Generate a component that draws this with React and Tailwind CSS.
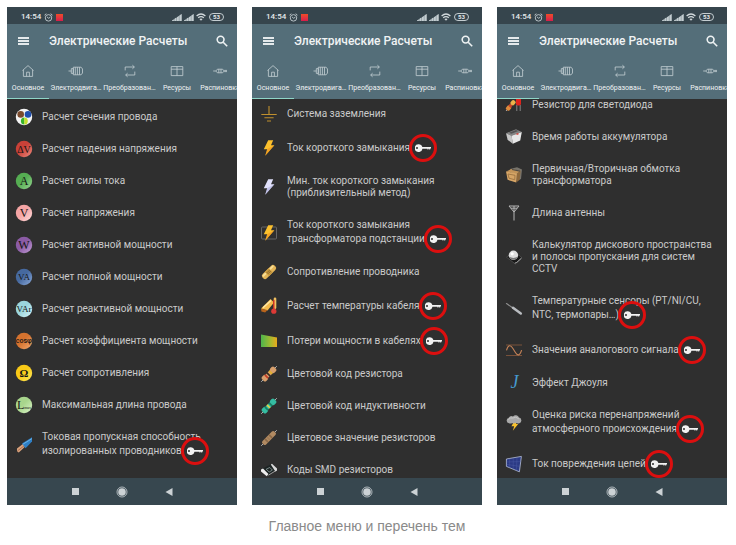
import React from "react";

const SERIF = "Liberation Serif, serif";
const ROBOTO = "Roboto, sans-serif";

function Disc({ id, light, dark, label, size = 10, color = "#151515", family = SERIF, y = 11.5, weight = 400 }) {
  return (
    <svg viewBox="0 0 16 16" className="size-4 overflow-visible" aria-hidden="true">
      <defs>
        <linearGradient id={id} x1="0" y1="0" x2="1" y2="1">
          <stop offset="0" stopColor={dark} />
          <stop offset="0.45" stopColor={dark} />
          <stop offset="1" stopColor={light} />
        </linearGradient>
      </defs>
      <circle cx="8" cy="8" r="8.2" fill={`url(#${id})`} />
      <text x="8" y={y} textAnchor="middle" fontSize={size} fontFamily={family} fontWeight={weight} fill={color}>
        {label}
      </text>
    </svg>
  );
}

function Svg({ children }) {
  return (
    <svg viewBox="0 0 16 16" className="size-4 overflow-visible" fill="none" aria-hidden="true">
      {children}
    </svg>
  );
}

function WireSection() {
  return (
    <Svg>
      <circle cx="8" cy="8" r="8.2" fill="#f4f4f4" />
      <circle cx="4.7" cy="5.4" r="3.3" fill="#7a4a2c" />
      <circle cx="12" cy="5.4" r="3.3" fill="#1f4fae" />
      <path d="M8.4 8.6a3.5 3.5 0 0 0 0 7z" fill="#36b52a" />
      <path d="M8.3 8.6a3.5 3.5 0 0 1 0 7z" fill="#c4e02a" />
    </Svg>
  );
}

function WireEnd() {
  return (
    <Svg>
      <path d="M1 11.5 7.5 6.5l2 2.8L2.8 15.4Q.5 15 1 11.5z" fill="#d9a27c" />
      <path d="M1.6 13.8 8.4 8.6" stroke="#9c6546" strokeWidth=".8" />
      <path d="M6 6.6 16 .2v4.4L9.6 11.2z" fill="#2f7fc4" />
      <path d="M7 7.2 16 1.6" stroke="#69b1e6" />
    </Svg>
  );
}

function Ground() {
  return (
    <Svg>
      <path d="M8 0v8.5M.3 8.5h15.4M3.4 11.8h9.2M6 15h4" stroke="#c0902e" strokeWidth="1.1" />
    </Svg>
  );
}

function Bolt({ color = "#fbc02d", shade = "#f08c1c", framed = false }) {
  return (
    <Svg>
      {framed && <rect x=".5" y="2" width="15" height="12" rx="1" stroke="#747474" strokeWidth=".8" />}
      <path d="M7.2.2h5L10 5.2h3.4L4.2 15.8l2-6.6H2.8z" fill={color} />
      <path d="M13.4 5.2 4.2 15.8l2-6.6 1.6-1z" fill={shade} opacity=".55" />
    </Svg>
  );
}

function Conductor() {
  return (
    <Svg>
      <g transform="rotate(-45 8 8)">
        <rect x="-.6" y="5" width="17.2" height="6" rx="2.6" fill="#e3b558" />
        <rect x=".5" y="5.8" width="15" height="1.8" rx=".9" fill="#f8df97" />
        <rect x="5" y="5" width="5.5" height="6" fill="#c99b41" />
        <path d="M6.3 6.5v3M7.8 6.5v3M9.2 6.5v3" stroke="#77551c" strokeWidth=".7" />
      </g>
    </Svg>
  );
}

function CableTemp() {
  return (
    <Svg>
      <path d="M0 10.5 9.6 1l3.4 3.4-6.5 8z" fill="#f3b94c" />
      <path d="M2 9.8 10 2.4" stroke="#ffe9a8" strokeWidth="1.4" />
      <path d="M0 10.8 6.5 12l-2.3 2.4-3.8-1z" fill="#b8641c" />
      <path d="M14 .8v9" stroke="#f0c060" strokeWidth="2.6" strokeLinecap="round" />
      <path d="M12.8 2.5v10" stroke="#d12d20" strokeWidth="1.4" strokeLinecap="round" />
      <circle cx="12.8" cy="13.2" r="2.6" fill="#dd3a36" />
    </Svg>
  );
}

function PowerLoss() {
  return (
    <Svg>
      <defs>
        <linearGradient id="loss" x1="0" x2="1" y1="0" y2="0">
          <stop stopColor="#4eb54c" />
          <stop offset=".55" stopColor="#9cba32" />
          <stop offset="1" stopColor="#e9a91c" />
        </linearGradient>
      </defs>
      <path d="M0 1.6 16 4.6v9.4H0z" fill="url(#loss)" />
    </Svg>
  );
}

function Resistor({ body, bands, straight = false }) {
  return (
    <Svg>
      <g transform="rotate(-45 8 8)">
        <path d="M-3 8h22" stroke="#b9b9b9" strokeWidth=".9" />
        {straight ? (
          <rect x="-.4" y="5.5" width="16.8" height="5" rx="1.8" fill={body} />
        ) : (
          <>
            <rect x="2.5" y="6" width="11" height="4" fill={body} />
            <rect x="-.6" y="5" width="5.4" height="6" rx="1.8" fill={body} />
            <rect x="11.2" y="5" width="5.4" height="6" rx="1.8" fill={body} />
          </>
        )}
        {bands.map((c, i) => (
          <rect key={i} x={3.6 + i * 2.9} y="5.8" width="1.7" height="4.4" fill={c} />
        ))}
      </g>
    </Svg>
  );
}

function SmdChip() {
  return (
    <Svg>
      <path d="M0 7.5 10.5 2 16 7.2 5.8 14z" fill="#1d2424" />
      <path d="M0 7.5 2 6.5l5.4 5.4-1.6 2.3L0 9.4z" fill="#eeeeee" />
      <path d="M9.8 2.4 11 1.8l5 4.8v2l-1.6.9z" fill="#dadada" />
      <path d="m5.2 7.2 3.6-1.7 2.6 2.6-3.2 1.9z" stroke="#8a9c99" strokeWidth=".8" />
      <path d="m7.4 13.2 8.2-5" stroke="#cfcfcf" strokeWidth=".7" />
    </Svg>
  );
}

function LedResistor() {
  return (
    <Svg>
      <path d="M0 14 7 6" stroke="#aaa" />
      <g transform="rotate(-50 4 9)">
        <rect x="-1" y="7" width="5" height="4.4" rx="1.5" fill="#e08a3c" />
        <rect x="3" y="7.6" width="3" height="3.2" fill="#c8452a" />
        <rect x="6" y="7" width="5" height="4.4" rx="1.5" fill="#edb34a" />
      </g>
      <path d="M10.8 8v6M14.2 8v6" stroke="#9c9c9c" strokeWidth=".8" />
      <rect x="10" y="1" width="5" height="7.6" rx="1.8" fill="#e0231c" />
    </Svg>
  );
}

function Battery() {
  return (
    <Svg>
      <path d="M0 4.2 10 .2 15.8 3 5.6 6.8z" fill="#858585" />
      <path d="M0 4.2 5.6 6.8 6.8 14.8 1.6 10.8z" fill="#c7c7c7" />
      <path d="M5.6 6.8 15.8 3 14.2 11.6 6.8 14.8z" fill="#e8e8e8" />
      <path d="m3 3.7 7-2.7 2.4 1.1-7 2.7z" fill="#555" />
      <path d="m10.5 5.4 2-.8" stroke="#d43a30" strokeWidth="1.4" />
    </Svg>
  );
}

function TransformerBox() {
  return (
    <Svg>
      <path d="M4 2 11 .2 16 2.5 15 12 8 15z" fill="#77736b" />
      <path d="M0 4.5 5.5 2l9 1.7-3.5 3z" fill="#c39458" />
      <path d="M0 4.5 11 6.5 10.2 15.5 1.6 12.8z" fill="#d6a566" />
      <path d="m11 6.5 3.5-2.8-.8 9-3.5 2.8z" fill="#8e683b" />
      <path d="m2 7 7 1.3-.3 4.4L3 11.2z" stroke="#9c7341" strokeWidth=".9" />
      <path d="m6 2.5 8 1.6" stroke="#4c4a46" strokeWidth="1.2" />
    </Svg>
  );
}

function Antenna() {
  return (
    <Svg>
      <path d="M3 1h10L8 7zM8 1v14.5M4.8 3.2h6.4" stroke="#b7b7b7" strokeWidth="1" />
    </Svg>
  );
}

function Camera() {
  return (
    <Svg>
      <path d="M.5 8.2 9 3l7 5.8L9.4 15z" fill="#191919" stroke="#5c5c5c" strokeWidth=".6" />
      <path d="m11 13.2 4.4-4M8.8 14.2l2-.8" stroke="#ccc" strokeWidth=".8" />
      <circle cx="7.4" cy="6.2" r="4.7" fill="#dedede" />
      <path d="M3 7.8a4.7 4.7 0 0 0 8.8 0Q7.4 10 3 7.8z" fill="#777" />
      <circle cx="6.2" cy="4.8" r="1.6" fill="#fff" />
    </Svg>
  );
}

function Probe() {
  return (
    <Svg>
      <path d="m.5 2.6 7.2 4.8" stroke="#8d8d8d" strokeWidth="1.2" strokeLinecap="round" />
      <path d="m7 6.8 7.8 5.6" stroke="#b9bcc0" strokeWidth="2.5" strokeLinecap="round" />
    </Svg>
  );
}

function Analog() {
  return (
    <Svg>
      <path d="M0 3h16M0 13.5h16" stroke="#8b5a3d" strokeWidth=".8" />
      <path d="M.5 8.4C2 2.6 4.6 2.6 6.6 6l3 4.8c2 3.4 4.6 2.6 6-2.6" stroke="#c58358" strokeWidth="1.1" />
    </Svg>
  );
}

function Joule() {
  return (
    <Svg>
      <text x="8.5" y="13" textAnchor="middle" fontFamily={SERIF} fontStyle="italic" fontSize="18" fill="#4699cf">
        J
      </text>
    </Svg>
  );
}

function Storm() {
  return (
    <Svg>
      <path d="M8.6 5.6h3L10 9h2.2L6.8 15.8l1.4-4.6H5.4z" fill="#f9c22c" />
      <path d="M3 8.2a2.6 2.6 0 0 1-.4-5.1A3 3 0 0 1 7 1.4a3.6 3.6 0 0 1 6 1.2 2.9 2.9 0 0 1 .4 5.6q-2.2.6-3.4-.5-2 1.4-3.8.2-1.6 1.2-3.2.3z" fill="#a9a9a9" />
      <path d="M2.4 4.6Q4 2.2 7 3q2.6-2 5.8.8" stroke="#c6c6c6" />
    </Svg>
  );
}

function Panel() {
  return (
    <Svg>
      <path d="M.4 3 15.4.4 13.4 15.8.4 10.4z" fill="#2b3a85" stroke="#b8c2dc" strokeWidth=".8" />
      <path d="M3.6 2.6v9M7.2 2v11.2M11 1.4 10.4 14.6M.6 6 14.6 5.6M.6 8.4l13.4 2" stroke="#5261a8" strokeWidth=".4" />
    </Svg>
  );
}

const PHONES = [
  {
    offset: "pt-0.5",
    rows: [
      [<WireSection />, ["Расчет сечения провода"]],
      [<Disc id="dv" dark="#c94138" light="#ef8d80" label="ΔV" size={10} />, ["Расчет падения напряжения"]],
      [<Disc id="a" dark="#55ad52" light="#98d592" label="A" size={12} y={12} />, ["Расчет силы тока"]],
      [<Disc id="v" dark="#f4a5a5" light="#ffdcdc" label="V" size={12} y={12} />, ["Расчет напряжения"]],
      [<Disc id="w" dark="#8b5ba5" light="#c19cd5" label="W" size={12} y={12} />, ["Расчет активной мощности"]],
      [<Disc id="va" dark="#46699f" light="#8cabdc" label="VA" size={9} y={11} />, ["Расчет полной мощности"]],
      [<Disc id="var" dark="#9bd5dc" light="#d7f6fa" label="VAr" size={9} y={11} />, ["Расчет реактивной мощности"]],
      [<Disc id="cos" dark="#d5722e" light="#f5aa70" label="cosφ" size={7} y={10} family={ROBOTO} weight={500} />, ["Расчет коэффициента мощности"]],
      [<Disc id="ohm" dark="#f8c916" light="#ffe85c" label="Ω" size={11} weight={700} />, ["Расчет сопротивления"]],
      [
        <Disc
          id="lmax"
          dark="#a8d58c"
          light="#dbf5c9"
          size={12}
          y={12}
          label={
            <>
              L<tspan fontSize="4">max</tspan>
            </>
          }
        />,
        ["Максимальная длина провода"],
      ],
      [<WireEnd />, ["Токовая пропускная способность", "изолированных проводников"], true],
    ],
  },
  {
    offset: "-mt-px",
    rows: [
      [<Ground />, ["Система заземления"]],
      [<Bolt />, ["Ток короткого замыкания"], true],
      [<Bolt color="#e1e1fb" shade="#a9a9dc" />, ["Мин. ток короткого замыкания", "(приблизительный метод)"]],
      [<Bolt framed />, ["Ток короткого замыкания", "трансформатора подстанции"], true],
      [<Conductor />, ["Сопротивление проводника"]],
      [<CableTemp />, ["Расчет температуры кабеля"], true],
      [<PowerLoss />, ["Потери мощности в кабелях"], true],
      [<Resistor body="#d79f6c" bands={["#c23b25", "#3a2a1d", "#e2b22b"]} />, ["Цветовой код резистора"]],
      [<Resistor body="#35bda2" bands={["#197b62", "#e2d34b", "#197b62"]} />, ["Цветовой код индуктивности"]],
      [<Resistor body="#b18a62" bands={["#8c6a48", "#a07c56", "#8c6a48"]} straight />, ["Цветовое значение резисторов"]],
      [<SmdChip />, ["Коды SMD резисторов"]],
    ],
  },
  {
    offset: "-mt-2.5",
    rows: [
      [<LedResistor />, ["Резистор для светодиода"]],
      [<Battery />, ["Время работы аккумулятора"]],
      [<TransformerBox />, ["Первичная/Вторичная обмотка", "трансформатора"]],
      [<Antenna />, ["Длина антенны"]],
      [<Camera />, ["Калькулятор дискового пространства", "и полосы пропускания для систем", "CCTV"]],
      [<Probe />, ["Температурные сенсоры (PT/NI/CU,", "NTC, термопары…)"], true],
      [<Analog />, ["Значения аналогового сигнала"], true],
      [<Joule />, ["Эффект Джоуля"]],
      [<Storm />, ["Оценка риска перенапряжений", "атмосферного происхождения"], true],
      [<Panel />, ["Ток повреждения цепей"], true],
    ],
  },
];

function Key() {
  return (
    <span className="relative ml-[5px] flex h-[15px] w-4 items-center">
      <svg viewBox="0 0 16 8" className="h-2 w-4" aria-hidden="true">
        <path
          d="M4 .2A3.8 3.8 0 0 1 7.4 3H16v1.6h-.8v1h-1v-.8h-.8v.8h-1v-.8H7.5A3.9 3.9 0 1 1 4 .2zM2 3a1 1 0 1 0 0 2 1 1 0 0 0 0-2z"
          fill="#f2f2f2"
          fillRule="evenodd"
        />
      </svg>
      <span className="absolute top-1/2 left-1/2 size-7 -translate-x-1/2 -translate-y-1/2 rounded-full border-3 border-[#dc0f0f]" />
    </span>
  );
}

function Row({ icon, lines, locked }) {
  return (
    <li>
      <button type="button" className="flex w-full items-center gap-[10px] px-[9px] py-[10px] text-left">
        <span className="-my-2 shrink-0">{icon}</span>
        <span className="flex flex-col text-[10px] leading-3 whitespace-nowrap text-[#cacaca]">
          {lines.map((line, i) => (
            <span key={line} className="flex items-center">
              {line}
              {locked && i === lines.length - 1 && <Key />}
            </span>
          ))}
        </span>
      </button>
    </li>
  );
}

function Signal() {
  return (
    <svg viewBox="0 0 10 7" className="h-[7px] w-[10px]" aria-hidden="true">
      <path d="M0 7 9.6 0v7z" fill="#8b999f" />
      <path d="M0 7V6.4l1.8-1.2V7zM2.5 7V4.8l1.8-1.2V7zM5 7V3.2L6.8 2v5zM7.5 7V1.5L9.6 0v7z" fill="#c4cdd1" />
    </svg>
  );
}

function StatusBar() {
  return (
    <div className="flex h-[17px] shrink-0 items-center bg-[#36454d] pt-[3px] pr-[13px] pl-[14px] text-[#e6eaec]">
      <span className="text-[8px] leading-none font-medium">14:54</span>
      <svg viewBox="0 0 10 10" className="ml-[3px] size-[9px]" fill="none" stroke="#c4cdd1" aria-hidden="true">
        <circle cx="5" cy="5.4" r="3.6" />
        <path d="M.6 2.4 2.6.8M9.4 2.4 7.4.8M3.4 4.4 5 5.8l2-1" />
      </svg>
      <span className="ml-[3px] size-[7px] bg-linear-to-b from-[#ef4a26] to-[#d81b4a]" />
      <span className="ml-auto flex items-center gap-[2px]">
        <Signal />
        <Signal />
        <svg viewBox="0 0 10 8" className="h-2 w-[10px]" fill="none" stroke="#d2d9dc" strokeWidth="1.3" aria-hidden="true">
          <path d="M.6 3Q5-1 9.4 3M2.2 4.8Q5 2.4 7.8 4.8" />
          <path d="M3.4 6 5 7.8 6.6 6Q5 5 3.4 6z" fill="#d2d9dc" stroke="none" />
        </svg>
        <span className="ml-px flex h-2 w-[15px] items-center justify-center rounded-full border border-[#c4cdd1] text-[6px] leading-none font-bold">
          53
        </span>
      </span>
    </div>
  );
}

const TABS = [
  {
    label: "Основное",
    width: "w-[42px]",
    active: true,
    icon: <path d="M1.5 6.5 7 1.6l5.5 4.9M2.4 5.8v6.6h9.2V5.8M5.6 12.4V8.2h2.8v4.2" />,
  },
  {
    label: "Электродвига…",
    width: "w-[54px]",
    icon: <path d="M-.5 7h2.8M2.3 4.6h2v4.8h-2zM4.3 3.2h6.2v7.6H4.3zM6.3 3.2v7.6M8.4 3.2v7.6M10.5 3.2h1.6l1.4 1.8v4l-1.4 1.8h-1.6" />,
  },
  {
    label: "Преобразован…",
    width: "w-[53px]",
    icon: <path d="M2.2 6.4V3h9M9.4 1.2 11.4 3 9.4 4.8M11.8 7.6V11H2.8M4.6 9.2 2.6 11l2 1.8" />,
  },
  {
    label: "Ресурсы",
    width: "w-[42px]",
    icon: <path d="M1.2 2.6h11.6v9H1.2zM7 2.6v9M1.2 5.2h11.6" />,
  },
  {
    label: "Распиновка",
    width: "w-[44px]",
    icon: <path d="M.2 7h2.6l1.6-1.8h5.2L11.2 7l-1.6 1.8H4.4L2.8 7M11.2 6.4h2.8M11.2 7.6h2.8M5.8 5.2v3.6M8 5.2v3.6" />,
  },
];

function Header() {
  return (
    <header className="shrink-0 bg-[#546e79] text-[#f0f3f4]">
      <div className="flex h-[34px] items-center pr-[9px] pl-[11px]">
        <button type="button" aria-label="Меню" className="flex w-[11px] flex-col gap-px">
          <span className="h-[2px] bg-[#e4e9eb]" />
          <span className="h-[2px] bg-[#e4e9eb]" />
          <span className="h-[2px] bg-[#e4e9eb]" />
        </button>
        <h2 className="ml-5 text-[12px] leading-none font-medium whitespace-nowrap">Электрические Расчеты</h2>
        <button type="button" aria-label="Поиск" className="ml-auto">
          <svg viewBox="0 0 12 12" className="size-3" fill="none" stroke="#eef2f3" strokeWidth="1.6" aria-hidden="true">
            <circle cx="4.6" cy="4.6" r="3.4" />
            <path d="m7.2 7.2 4 4" />
          </svg>
        </button>
      </div>
      <nav className="flex h-[41px] overflow-hidden">
        {TABS.map((tab) => (
          <button
            key={tab.label}
            type="button"
            className={`${tab.width} flex shrink-0 flex-col items-center border-b pt-[6px] ${tab.active ? "border-[#8fd6c8]" : "border-transparent"}`}
          >
            <svg viewBox="0 0 14 14" className="size-[14px] overflow-visible" fill="none" stroke="#c5d0d4" strokeWidth=".8" aria-hidden="true">
              {tab.icon}
            </svg>
            <span className="mt-[6px] text-[7px] leading-2 whitespace-nowrap">{tab.label}</span>
          </button>
        ))}
      </nav>
    </header>
  );
}

function NavBar() {
  return (
    <div className="flex h-[27px] shrink-0 items-center justify-center gap-[37px] bg-[#37474f]">
      <button type="button" aria-label="Недавние" className="flex w-2 justify-center">
        <span className="size-[7px] bg-[#ccd2d5]" />
      </button>
      <button type="button" aria-label="Домой">
        <svg viewBox="0 0 12 12" className="size-3" fill="none" aria-hidden="true">
          <circle cx="6" cy="6" r="5" stroke="#ccd2d5" strokeWidth=".8" />
          <circle cx="6" cy="6" r="3.8" fill="#ccd2d5" />
        </svg>
      </button>
      <button type="button" aria-label="Назад">
        <svg viewBox="0 0 8 10" className="h-[10px] w-2" aria-hidden="true">
          <path d="M7.5 1v8L.5 5z" fill="#ccd2d5" />
        </svg>
      </button>
    </div>
  );
}

function Phone({ phone }) {
  return (
    <section className="flex aspect-[230/498] flex-col overflow-hidden bg-[#2f2f2f] font-[Roboto,sans-serif]">
      <StatusBar />
      <Header />
      <div className="min-h-0 flex-1 overflow-hidden">
        <ul className={phone.offset}>
          {phone.rows.map(([icon, lines, locked]) => (
            <Row key={lines[0]} icon={icon} lines={lines} locked={locked} />
          ))}
        </ul>
      </div>
      <NavBar />
    </section>
  );
}

export default function App() {
  return (
    <figure className="bg-white pt-[7px] pr-[9px] pl-[7px]">
      <div className="grid grid-cols-3 gap-[15px]">
        {PHONES.map((phone) => (
          <Phone key={phone.offset} phone={phone} />
        ))}
      </div>
      <figcaption className="mt-3 text-center font-['Liberation_Sans',sans-serif] text-[14px] leading-[18px] text-[#8a8a8a]">
        Главное меню и перечень тем
      </figcaption>
    </figure>
  );
}
